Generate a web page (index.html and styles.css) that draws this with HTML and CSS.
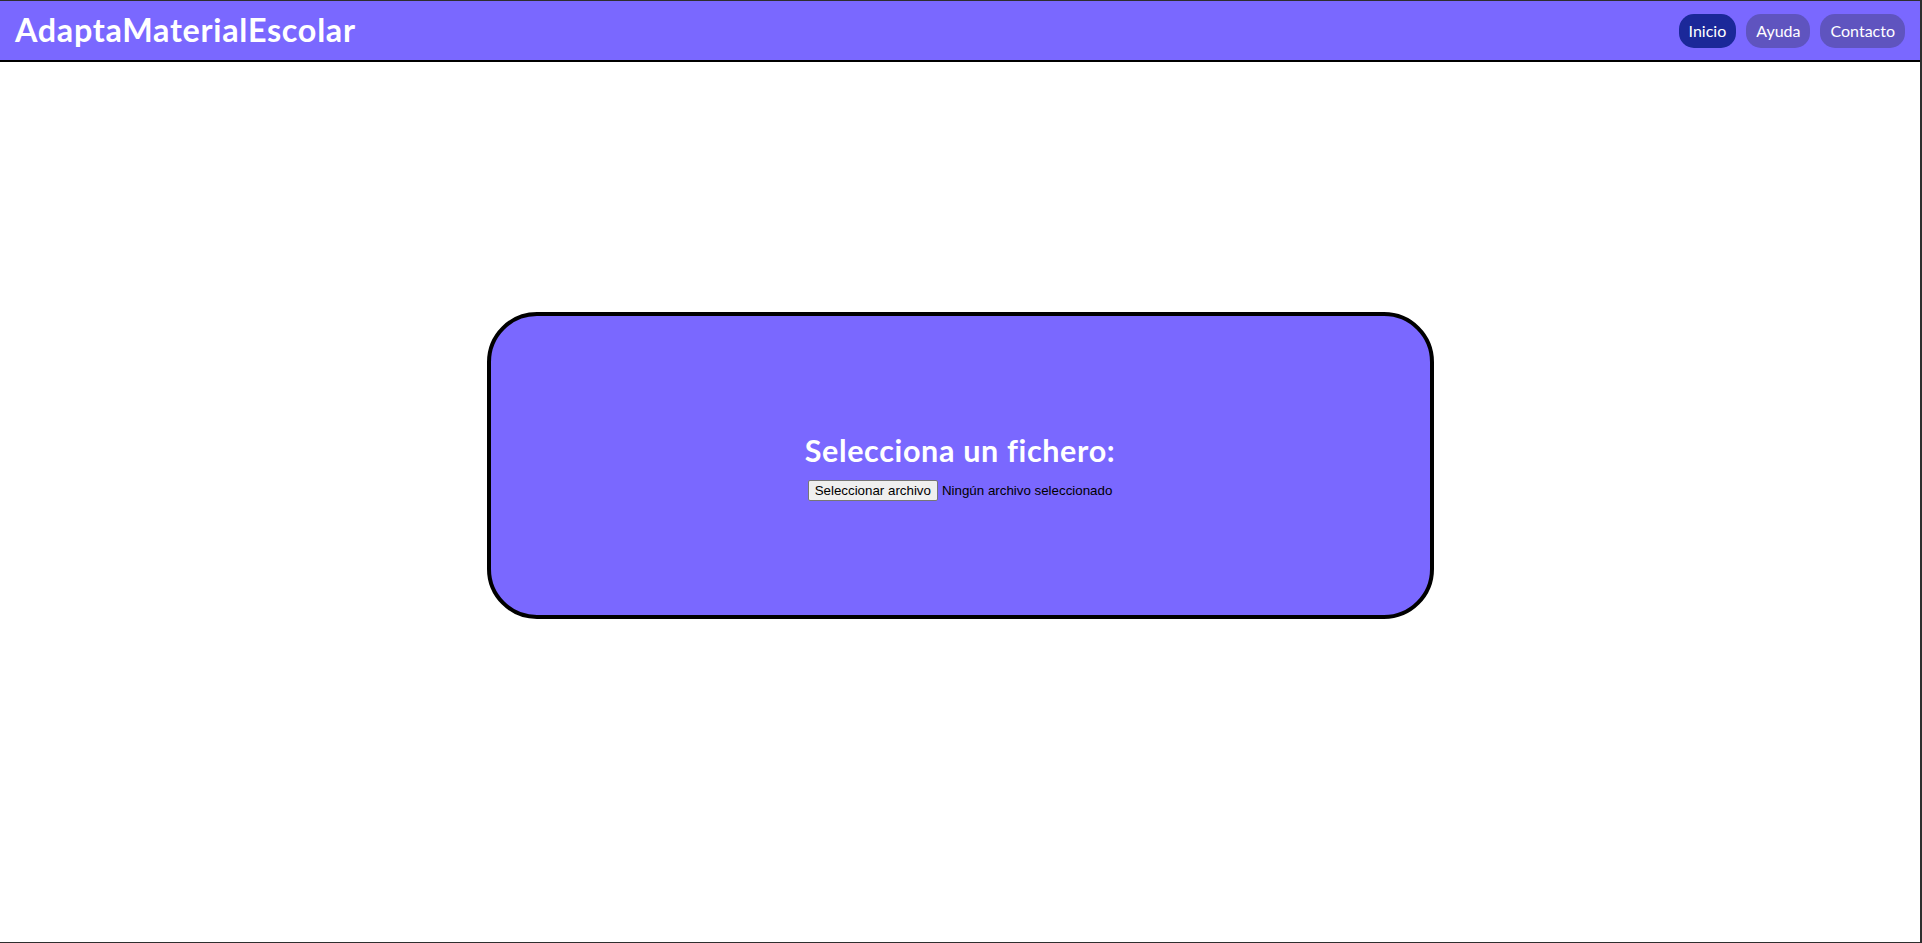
FILE: index.html
```html
<!DOCTYPE html>
<html lang="es">
<head>
<meta charset="utf-8">
<title>AdaptaMaterialEscolar</title>
<link rel="stylesheet" href="styles.css">
</head>
<body>
<div class="frame">
  <header class="topbar">
    <h1 class="brand">AdaptaMaterialEscolar</h1>
    <nav class="nav">
      <a class="pill pill-active" href="#">Inicio</a>
      <a class="pill" href="#">Ayuda</a>
      <a class="pill" href="#">Contacto</a>
    </nav>
  </header>
  <main class="main">
    <section class="card">
      <h2 class="card-title">Selecciona un fichero:</h2>
      <div class="file">
        <button class="file-btn" type="button">Seleccionar archivo</button>
        <span class="file-name">Ningún archivo seleccionado</span>
      </div>
    </section>
  </main>
</div>
</body>
</html>
```
FILE: styles.css
```css
html {
  background: #2e2e2e;
  margin: 0;
  padding: 0;
}
body {
  margin: 0;
  padding: 1px 2px 1px 0;
  height: 943px;
  box-sizing: border-box;
  overflow: hidden;
}
.frame {
  background: #ffffff;
  height: 941px;
  display: flex;
  flex-direction: column;
}
.topbar {
  height: 59px;
  background: #7a68ff;
  border-bottom: 2px solid #000;
  display: flex;
  align-items: center;
  justify-content: space-between;
  padding: 0 15px 0 15px;
}
.brand {
  margin: 0;
  font-family: "Lato", "Open Sans", sans-serif;
  font-weight: 700;
  font-size: 32.3px;
  letter-spacing: 0.72px;
  color: #ffffff;
  line-height: 1;
}
.nav {
  display: flex;
  gap: 10px;
}
.pill {
  display: block;
  height: 34px;
  line-height: 34px;
  padding: 0 10px;
  border-radius: 15px;
  background: #5f54bf;
  color: #ffffff;
  text-decoration: none;
  font-family: "Lato", "Open Sans", sans-serif;
  font-size: 16px;
}
.pill-active {
  background: #1b2899;
}
.main {
  flex: 1;
  display: flex;
  justify-content: center;
  align-items: flex-start;
  padding-top: 250px;
}
.card {
  width: 939px;
  height: 298px;
  padding-top: 1px;
  box-sizing: content-box;
  border: 4px solid #000;
  border-radius: 50px;
  background: #7a68ff;
  display: flex;
  flex-direction: column;
  align-items: center;
  justify-content: center;
}
.card-title {
  margin: 0 0 9px 0;
  font-family: "Lato", "Open Sans", sans-serif;
  font-weight: 700;
  font-size: 30.5px;
  letter-spacing: 0.65px;
  color: #ffffff;
  line-height: 1.3;
}
.file {
  display: flex;
  align-items: center;
  gap: 4px;
  font-family: "Liberation Sans", Arial, sans-serif;
  font-size: 13.33px;
  color: #000;
}
.file-btn {
  height: 21px;
  padding: 0 6px;
  background: #efefef;
  border: 1px solid #767676;
  border-radius: 2px;
  font-family: "Liberation Sans", Arial, sans-serif;
  font-size: 13.33px;
  color: #000;
}
```
